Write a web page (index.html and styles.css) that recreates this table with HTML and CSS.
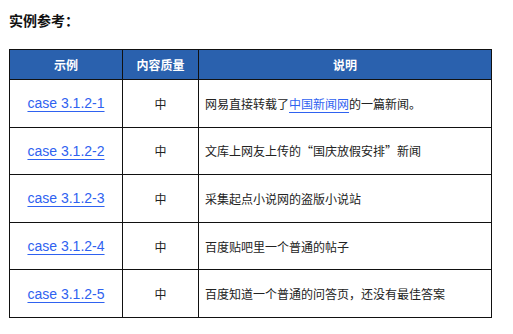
FILE: index.html
```html
<!DOCTYPE html>
<html lang="zh-CN">
<head>
<meta charset="utf-8">
<title>实例参考</title>
<link rel="stylesheet" href="styles.css">
</head>
<body>
<div class="page">
  <h3 class="title">实例参考：</h3>
  <table class="cases">
    <colgroup>
      <col class="c1"><col class="c2"><col class="c3">
    </colgroup>
    <thead>
      <tr><th>示例</th><th>内容质量</th><th>说明</th></tr>
    </thead>
    <tbody>
      <tr><td class="case"><a href="#">case 3.1.2-1</a></td><td class="q">中</td><td class="desc">网易直接转载了<a href="#">中国新闻网</a>的一篇新闻。</td></tr>
      <tr><td class="case"><a href="#">case 3.1.2-2</a></td><td class="q">中</td><td class="desc">文库上网友上传的“国庆放假安排”新闻</td></tr>
      <tr><td class="case"><a href="#">case 3.1.2-3</a></td><td class="q">中</td><td class="desc">采集起点小说网的盗版小说站</td></tr>
      <tr><td class="case"><a href="#">case 3.1.2-4</a></td><td class="q">中</td><td class="desc">百度贴吧里一个普通的帖子</td></tr>
      <tr><td class="case"><a href="#">case 3.1.2-5</a></td><td class="q">中</td><td class="desc">百度知道一个普通的问答页，还没有最佳答案</td></tr>
    </tbody>
  </table>
</div>
</body>
</html>
```
FILE: styles.css
```css
html, body {
  margin: 0;
  padding: 0;
  background: #fff;
}
body {
  font-family: "Liberation Sans", "Noto Sans CJK SC", sans-serif;
  color: #222;
}
.page {
  padding: 11px 9px 0 9px;
}
.title {
  margin: 0 0 18px 0;
  font-size: 14px;
  line-height: 20px;
  font-weight: bold;
  color: #111;
}
.cases {
  border-collapse: collapse;
  width: 482px;
  table-layout: fixed;
}
.c1 { width: 113px; }
.c2 { width: 76px; }
.c3 { width: 293px; }
.cases th, .cases td {
  border: 1px solid #111;
  padding: 0 6px;
}
.cases th {
  background: #2a61ae;
  color: #fff;
  font-size: 12px;
  font-weight: bold;
  height: 29px;
  text-align: center;
  font-family: "Noto Sans CJK SC", sans-serif;
}
.cases td {
  height: 46.6px;
  font-size: 12px;
}
.case {
  text-align: center;
}
.case a {
  font-size: 14px;
  color: #2f62f0;
  text-decoration: underline;
  text-underline-offset: 3px;
}
.q {
  text-align: center;
  color: #222;
  font-family: "Noto Sans CJK SC", sans-serif;
}
.desc {
  font-family: "Noto Sans CJK SC", sans-serif;
}
.desc a {
  color: #2f62f0;
  text-decoration: underline;
  text-underline-offset: 3px;
}
```
